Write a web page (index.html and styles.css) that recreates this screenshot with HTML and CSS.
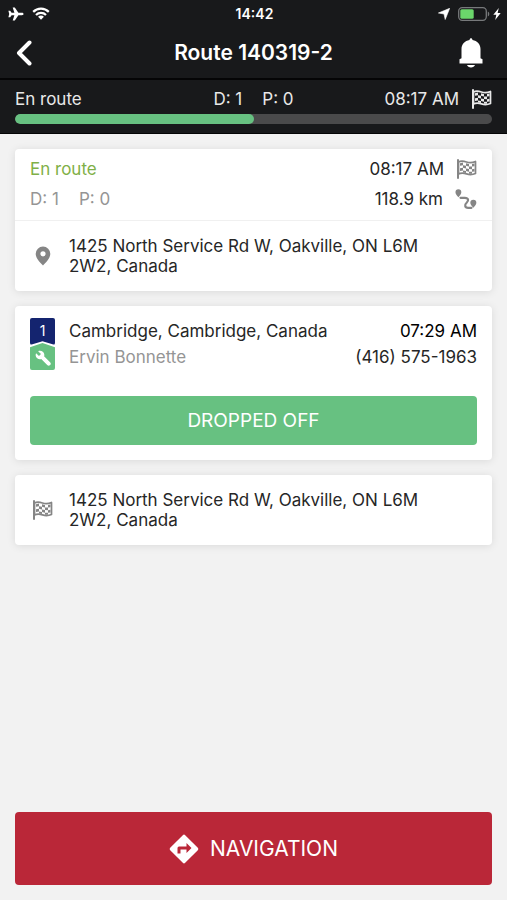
FILE: index.html
```html
<!DOCTYPE html>
<html lang="en">
<head>
<meta charset="utf-8">
<meta name="viewport" content="width=device-width, initial-scale=1">
<title>Route 140319-2</title>
<link rel="stylesheet" href="styles.css">
</head>
<body>
<svg class="symbols" aria-hidden="true">
  <symbol id="flag" viewBox="0 0 20 20">
    <path d="M1.500 1v18" fill="none" stroke="currentColor" stroke-width="2" stroke-linecap="round"/>
    <path d="M2 3c3-1.600 5.500-.8 8 0s5.500 1 9-.5v12c-3.500 1.500-6.500 1.200-9 .4s-5-1.400-8 .2z" fill="none" stroke="currentColor" stroke-width="1.700" stroke-linejoin="round"/>
    <path d="M3.500 4.200l3-.6v2.600l-3 .5zM9.500 4.200l3 .7v2.600l-3-.7zM15.500 5l2.500-.4v2.600l-2.500.4zM6.500 6.200l3 .6v2.600l-3-.6zM12.500 7.500l3 .1v2.600l-3-.1zM3.500 9.300l3-.5v2.600l-3 .5zM9.500 9.400l3 .7v2.600l-3-.7zM15.500 10.200l2.500-.4v2.600l-2.500.4zM6.500 11.400l3 .6v2l-3-.6zM12.500 12.700l3 .1v2l-3-.1z" fill="currentColor"/>
  </symbol>
</svg>
<div class="app">
  <header class="top">
    <div class="status">
      <div class="status-side">
        <svg class="plane" viewBox="0 0 16 14"><path d="M15.500 7c0 .8-.7 1.200-1.500 1.200h-3.600L6.800 13.500H4.700L6.400 8.200H3.600L2.200 10.200H.4L1.200 7 .4 3.800h1.800l1.400 2h2.800L4.700.5h2.100l3.600 5.300H14c.8 0 1.500.4 1.500 1.200z" fill="currentColor"/></svg>
        <svg class="wifi" viewBox="0 0 18 13"><g fill="none" stroke="currentColor" stroke-width="2.200"><path d="M1.200 4.900a11 11 0 0 1 15.600 0"/><path d="M4 7.900a7 7 0 0 1 10 0"/></g><path d="M9 12.700l-2.900-3a4 4 0 0 1 5.800 0z" fill="currentColor"/></svg>
      </div>
      <span class="clock">14:42</span>
      <div class="status-side status-end">
        <svg class="locate" viewBox="0 0 12 12"><path d="M11.700.3L7.200 11.500 6 6 .4 5z" fill="currentColor" stroke="currentColor" stroke-width=".6" stroke-linejoin="round"/></svg>
        <svg class="battery" viewBox="0 0 32 14"><rect x=".7" y=".7" width="27.600" height="12.600" rx="3.500" fill="none" stroke="#77797b" stroke-width="1.300"/><path d="M29.800 4.500c2 .8 2 4.200 0 5z" fill="#77797b"/><rect x="2.300" y="2.300" width="13.400" height="9.400" rx="1.500" fill="#6bd66b"/></svg>
        <svg class="bolt" viewBox="0 0 8 12"><path d="M5.800 0L.3 6.800h3L2.200 12l5.500-7H4.600z" fill="currentColor"/></svg>
      </div>
    </div>
    <div class="nav">
      <button class="icon-button" type="button" aria-label="Back"><svg class="chevron" viewBox="0 0 16 26"><path d="M13.500 2.500L3 13l10.500 10.500" fill="none" stroke="currentColor" stroke-width="4" stroke-linecap="round" stroke-linejoin="round"/></svg></button>
      <h1 class="title">Route 140319-2</h1>
      <button class="icon-button icon-button-end" type="button" aria-label="Notifications"><svg class="bell" viewBox="0 0 24 30"><path d="M12 .3c.8 0 1.300.6 1.500 1.600 4.700.8 8 4.300 8 9.100v9.200l2 1v4.300H.5v-4.300l2-1V11c0-4.800 3.300-8.300 8-9.100.2-1 .7-1.600 1.500-1.600zM8 27h8c-.6 1.600-2 2.500-4 2.500S8.600 28.600 8 27z" fill="currentColor"/></svg></button>
    </div>
    <div class="summary">
      <div class="summary-row">
        <span>En route</span>
        <span class="counts"><span>D: 1</span><span>P: 0</span></span>
        <span class="metric"><span>08:17 AM</span><svg class="flag"><use href="#flag"/></svg></span>
      </div>
      <div class="track" role="progressbar" aria-label="Route progress" aria-valuenow="50" aria-valuemin="0" aria-valuemax="100"><div class="fill" style="width:50%"></div></div>
    </div>
  </header>

  <main class="content">
    <section class="card">
      <div class="overview">
        <div class="row"><span class="state">En route</span><span class="metric"><span>08:17 AM</span><svg class="flag muted"><use href="#flag"/></svg></span></div>
        <div class="row"><span class="counts muted-text"><span>D: 1</span><span>P: 0</span></span><span class="metric"><span>118.9 km</span>
          <svg class="trail muted" viewBox="0 0 24 22"><path d="M3.700 9C2 7 .5 5.500.5 3.500a3.200 3.200 0 0 1 6.400 0C6.900 5.500 5.400 7 3.700 9zM20 20.500c-1.700-2-3.300-3.500-3.300-5.500a3.300 3.300 0 0 1 6.600 0c0 2-1.600 3.500-3.300 5.500z" fill="currentColor"/><path d="M6 9.700h4.700c4.300 0 4.400 3.300 2 5.400s-2.200 5.500 1.600 5.500H18" fill="none" stroke="currentColor" stroke-width="2.400" stroke-linecap="round"/></svg></span></div>
      </div>
      <div class="address">
        <span class="lead"><svg class="pin muted" viewBox="0 0 16 20"><path fill-rule="evenodd" d="M8 .5a7.300 7.300 0 0 1 7.300 7.300C15.300 12 11 16.500 8 19.500 5 16.500.7 12 .7 7.800A7.300 7.300 0 0 1 8 .5zm0 4.700a2.600 2.600 0 1 0 0 5.200 2.600 2.600 0 0 0 0-5.200z" fill="currentColor"/></svg></span>
        <p class="place">1425 North Service Rd W, Oakville, ON L6M 2W2, Canada</p>
      </div>
    </section>

    <section class="card stop">
      <div class="stop-info">
        <div class="markers">
          <span class="order">1</span>
          <span class="job"><svg class="wrench" viewBox="0 0 24 24"><path d="M13.600 9.900c.9-2.300.4-5-1.500-6.900-2-2-5-2.400-7.400-1.300L9 6 6 9 1.600 4.700C.4 7.100.9 10.100 2.900 12.100c1.900 1.900 4.600 2.400 6.900 1.500z" fill="currentColor"/><path d="M10 10l10.500 10.500" stroke="currentColor" stroke-width="6" stroke-linecap="round"/></svg></span>
        </div>
        <div class="stop-text">
          <div class="row"><span>Cambridge, Cambridge, Canada</span><span class="time">07:29 AM</span></div>
          <div class="row"><span class="muted-text">Ervin Bonnette</span><a class="phone" href="tel:+14165751963">(416) 575-1963</a></div>
        </div>
      </div>
      <button class="done" type="button">DROPPED OFF</button>
    </section>

    <section class="card">
      <div class="address">
        <span class="lead"><svg class="flag muted"><use href="#flag"/></svg></span>
        <p class="place">1425 North Service Rd W, Oakville, ON L6M 2W2, Canada</p>
      </div>
    </section>
  </main>

  <footer class="footer">
    <button class="navigate" type="button">
      <svg class="turn" viewBox="0 0 30 30"><path fill-rule="evenodd" d="M13.800 1.200a1.700 1.700 0 0 1 2.400 0l12.600 12.600a1.700 1.700 0 0 1 0 2.400L16.200 28.800a1.700 1.700 0 0 1-2.400 0L1.200 16.200a1.700 1.700 0 0 1 0-2.400zM17.500 9v3.500H10a1.500 1.500 0 0 0-1.500 1.500v5.500h3v-4h6V19l5-5z" fill="currentColor"/></svg>
      <span>NAVIGATION</span>
    </button>
  </footer>
</div>
</body>
</html>
```

FILE: styles.css
```css
* {
  box-sizing: border-box;
}

body {
  margin: 0;
  background: #f2f2f2;
  color: #262626;
  font: 17px/20px Inter, "Liberation Sans", sans-serif;
}

button {
  padding: 0;
  border: 0;
  font: inherit;
  color: #fff;
}

svg {
  display: block;
  flex: none;
}

.symbols {
  position: absolute;
  width: 0;
  height: 0;
}

.app {
  display: flex;
  flex-direction: column;
  min-height: 100vh;
}

.top {
  background: #18191b;
  color: #fff;
}

.status {
  display: grid;
  grid-template-columns: 1fr auto 1fr;
  align-items: center;
  height: 27px;
  padding: 0 6px 0 8px;
}

.status-side {
  display: flex;
  align-items: center;
  gap: 8px;
}

.status-end {
  justify-content: flex-end;
}

.clock {
  font-size: 14px;
  font-weight: 600;
}

.plane { width: 16px; height: 14px; }
.wifi { width: 18px; height: 13px; }
.locate { width: 12px; height: 12px; }
.battery { width: 32px; height: 14px; }
.bolt { width: 8px; height: 12px; margin-left: -5px; }

.nav {
  display: grid;
  grid-template-columns: 48px 1fr 48px;
  align-items: center;
  height: 53px;
  padding: 0 8px;
  border-bottom: 2px solid #050506;
}

.title {
  margin: 0;
  font-size: 21px;
  font-weight: 600;
  text-align: center;
}

.icon-button {
  display: flex;
  align-items: center;
  height: 48px;
  padding: 0 8px;
  background: none;
}

.icon-button-end {
  justify-content: flex-end;
  padding: 0 16px 0 8px;
}

.chevron { width: 16px; height: 26px; }
.bell { width: 24px; height: 30px; }

.summary {
  padding: 9px 15px;
  border-bottom: 1px solid #050506;
  color: #e8e8e8;
}

.summary-row {
  display: grid;
  grid-template-columns: 1fr auto 1fr;
  align-items: center;
}

.counts {
  display: flex;
  gap: 20px;
}

.metric {
  display: flex;
  align-items: center;
  justify-content: flex-end;
  gap: 12px;
}

.flag { width: 21px; height: 20px; }
.trail { width: 22px; height: 22px; }
.pin { width: 16px; height: 20px; }

.muted { color: #858585; }
.muted-text { color: #959595; }

.track {
  height: 10px;
  margin-top: 5px;
  border-radius: 5px;
  background: #4a4a4b;
  overflow: hidden;
}

.fill {
  height: 100%;
  border-radius: 5px;
  background: #67c181;
}

.content {
  display: flex;
  flex: 1;
  flex-direction: column;
  gap: 15px;
  padding: 15px;
}

.card {
  border-radius: 4px;
  background: #fff;
  box-shadow: 0 1px 8px rgba(0, 0, 0, 0.1);
}

.overview {
  display: flex;
  flex-direction: column;
  gap: 10px;
  padding: 10px 15px 11px;
  border-bottom: 1px solid #f0f0f0;
}

.row {
  display: flex;
  align-items: center;
  justify-content: space-between;
  height: 20px;
}

.state {
  color: #7fb048;
}

.address {
  display: flex;
  align-items: center;
  gap: 14px;
  padding: 15px;
}

.lead {
  display: flex;
  justify-content: center;
  width: 25px;
}

.place {
  flex: 1;
  max-width: 360px;
  margin: 0;
}

.stop {
  padding: 12px 15px 15px;
}

.stop-info {
  display: flex;
  gap: 14px;
}

.stop-text {
  flex: 1;
}

.stop-text .row {
  height: 26px;
}

.time {
  color: #000;
}

.phone {
  color: inherit;
  text-decoration: none;
}

.markers {
  width: 25px;
}

.order,
.job {
  display: flex;
  align-items: center;
  justify-content: center;
  height: 27px;
  color: #fff;
}

.order {
  padding-bottom: 2px;
  border-radius: 2px;
  background: #14246f;
  clip-path: polygon(0 0, 100% 0, 100% 100%, 50% 86%, 0 100%);
  font-size: 14px;
}

.job {
  margin-top: -2px;
  padding-top: 3px;
  border-radius: 2px;
  background: #67c181;
  clip-path: polygon(0 16%, 50% 0, 100% 16%, 100% 100%, 0 100%);
}

.wrench { width: 16px; height: 16px; }

.done {
  display: block;
  width: 100%;
  height: 49px;
  margin-top: 26px;
  border-radius: 4px;
  background: #67c181;
  font-size: 19px;
}

.footer {
  padding: 0 15px 15px;
}

.navigate {
  display: flex;
  align-items: center;
  justify-content: center;
  gap: 11px;
  width: 100%;
  height: 73px;
  border-radius: 4px;
  background: #ba2738;
  font-size: 21px;
}

.turn { width: 30px; height: 30px; }
```
